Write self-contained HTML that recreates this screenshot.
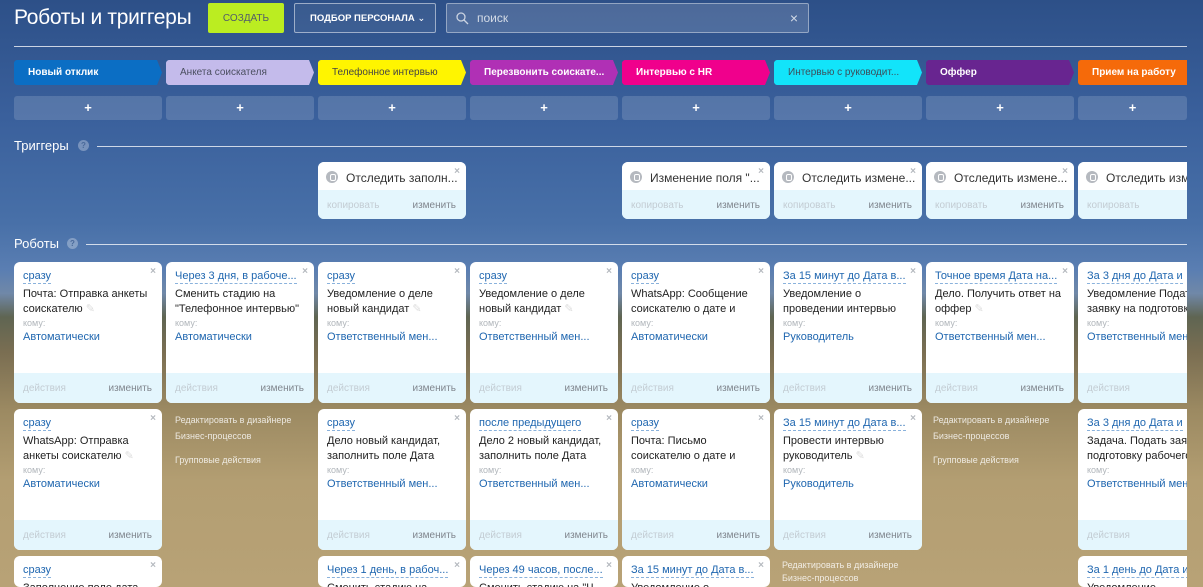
<!DOCTYPE html>
<html><head><meta charset="utf-8"><style>
*{box-sizing:border-box;margin:0;padding:0}
html{width:1203px;height:587px;overflow:hidden;background:#a8926a}
body{width:1203px;height:587px;overflow:hidden;position:relative;font-family:"Liberation Sans",sans-serif;
background:linear-gradient(180deg,#2d5088 0%,#3a609c 20%,#4870a8 38%,#5a7eb2 46%,#7088a8 50%,#5f6552 54%,#7a6e52 60%,#9c8a62 70%,#b39e72 82%,#b8a276 100%)}
.a{position:absolute}
.t{color:#fff;font-size:21px;left:14px;top:6px;letter-spacing:-.3px}
.btn{left:208px;top:3px;width:76px;height:30px;background:#bbed21;border-radius:2px;font-size:10px;color:#535c69;text-align:center;line-height:32px}
.sel{left:294px;top:3px;width:142px;height:30px;border:1px solid rgba(255,255,255,.5);border-radius:2px;color:#fff;font-size:9.5px;font-weight:bold;line-height:30px;padding-left:15px;background:rgba(255,255,255,.06)}
.srch{left:446px;top:3px;width:363px;height:30px;border:1px solid rgba(255,255,255,.4);border-radius:2px;background:rgba(255,255,255,.15);color:rgba(255,255,255,.75);font-size:12px;line-height:28px;padding-left:30px}
.hl{height:1px;background:rgba(255,255,255,.75)}
.st{top:60px;height:25px;width:152px;font-size:10px;font-weight:bold;line-height:25px;padding-left:14px;color:#fff;clip-path:polygon(0 2px,2px 0,calc(100% - 9px) 0,calc(100% - 4px) 12.5px,calc(100% - 9px) 25px,2px 25px,0 23px);border-radius:3px}
.pl{top:96px;height:24px;width:148px;background:rgba(255,255,255,.15);border-radius:3px;color:#fff;text-align:center;font-size:13px;font-weight:bold;line-height:24px}
.sec{color:#fff;font-size:13px}
.q{width:11px;height:11px;border-radius:50%;background:rgba(255,255,255,.3);color:#4a6a9a;font-size:8px;text-align:center;line-height:11px;font-weight:bold}
.tr{top:162px;width:148px;height:57px;background:#e4f6fd;border-radius:6px;overflow:hidden}
.tr .h{height:28px;background:#fff;font-size:12px;color:#333;padding:9px 0 0 28px;white-space:nowrap;position:relative}
.tr .h:before{content:"";position:absolute;left:8px;top:9px;width:12px;height:12px;border-radius:50%;background:#b5b9bf}
.tr .h:after{content:"";position:absolute;left:12px;top:12px;width:4px;height:5px;border:1px solid #fff;border-radius:2px}
.x{position:absolute;right:6px;top:4px;color:#b5b9bf;font-size:10px;font-weight:bold}
.f{position:absolute;bottom:0;left:0;right:0;height:30px;background:#e4f6fd;font-size:10px}
.f span{position:absolute;top:10px}
.f .l{left:9px;color:#c3ccd3}.f .r{right:10px;color:#80868e}
.tr .f{height:29px}
.c{width:148px;height:141px;background:#fff;border-radius:6px;overflow:hidden}
.c .d{position:absolute;left:9px;top:8px;font-size:11px;color:#2067b0;border-bottom:1px dashed #8ab2dc;white-space:nowrap;line-height:13px}
.c .n{position:absolute;left:9px;top:25px;width:136px;font-size:11px;color:#222;line-height:14.5px;max-height:29px;overflow:hidden}
.c .k{position:absolute;left:9px;top:56px;font-size:9px;color:#b1b6bb}
.c .w{position:absolute;left:9px;top:69px;font-size:11px;color:#2067b0;white-space:nowrap}
.lk{font-size:9px;color:rgba(255,255,255,.8);line-height:16px}
</style></head><body>
<div class="a t">Роботы и триггеры</div>
<div class="a btn">СОЗДАТЬ</div>
<div class="a sel">ПОДБОР ПЕРСОНАЛА <span style="font-weight:normal">&#8964;</span></div>
<div class="a srch">поиск<svg class="a" style="left:9px;top:8px" width="13" height="13" viewBox="0 0 13 13"><circle cx="5" cy="5" r="4" fill="none" stroke="rgba(255,255,255,.7)" stroke-width="1.3"/><path d="M8 8l4 4" stroke="rgba(255,255,255,.7)" stroke-width="1.3"/></svg><span class="a" style="right:10px;top:0;font-size:14px">×</span></div>
<div class="a hl" style="left:14px;top:46px;width:1173px"></div>

<div class="a st" style="left:14px;background:#0b6ec4">Новый отклик</div>
<div class="a st" style="left:166px;background:#c4bbeb;color:#4b4f60;font-weight:normal">Анкета соискателя</div>
<div class="a st" style="left:318px;background:#fff500;color:#444;font-weight:normal">Телефонное интервью</div>
<div class="a st" style="left:470px;background:#b030b5">Перезвонить соискате...</div>
<div class="a st" style="left:622px;background:#f0008c">Интервью с HR</div>
<div class="a st" style="left:774px;background:#12e4fa;color:#3d4e5b;font-weight:normal">Интервью с руководит...</div>
<div class="a st" style="left:926px;background:#682590">Оффер</div>
<div class="a st" style="left:1078px;width:109px;background:#f56a0a;clip-path:none;border-radius:3px 0 0 3px">Прием на работу</div>

<div class="a pl" style="left:14px">+</div><div class="a pl" style="left:166px">+</div><div class="a pl" style="left:318px">+</div><div class="a pl" style="left:470px">+</div><div class="a pl" style="left:622px">+</div><div class="a pl" style="left:774px">+</div><div class="a pl" style="left:926px">+</div><div class="a pl" style="left:1078px;width:109px">+</div>

<div class="a sec" style="left:14px;top:138px">Триггеры</div><div class="a q" style="left:78px;top:140px">?</div>
<div class="a hl" style="left:97px;top:146px;width:1090px"></div>
<div class="a sec" style="left:14px;top:236px">Роботы</div><div class="a q" style="left:67px;top:238px">?</div>
<div class="a hl" style="left:86px;top:244px;width:1101px"></div>

<div class="a tr" style="left:318px"><div class="h">Отследить заполн...<span class="x">×</span></div><div class="f"><span class="l">копировать</span><span class="r">изменить</span></div></div>
<div class="a tr" style="left:622px"><div class="h">Изменение поля "...<span class="x">×</span></div><div class="f"><span class="l">копировать</span><span class="r">изменить</span></div></div>
<div class="a tr" style="left:774px"><div class="h">Отследить измене...<span class="x">×</span></div><div class="f"><span class="l">копировать</span><span class="r">изменить</span></div></div>
<div class="a tr" style="left:926px"><div class="h">Отследить измене...<span class="x">×</span></div><div class="f"><span class="l">копировать</span><span class="r">изменить</span></div></div>
<div class="a tr" style="left:1078px;width:109px;border-radius:6px 0 0 6px"><div class="h">Отследить измене</div><div class="f"><span class="l">копировать</span></div></div>

<!-- row1 -->
<div class="a c" style="left:14px;top:262px"><span class="d">сразу</span><span class="x">×</span><div class="n">Почта: Отправка анкеты соискателю <span style="color:#ddd">✎</span></div><div class="k">кому:</div><div class="w">Автоматически</div><div class="f"><span class="l">действия</span><span class="r">изменить</span></div></div>
<div class="a c" style="left:166px;top:262px"><span class="d">Через 3 дня, в рабоче...</span><span class="x">×</span><div class="n">Сменить стадию на "Телефонное интервью"</div><div class="k">кому:</div><div class="w">Автоматически</div><div class="f"><span class="l">действия</span><span class="r">изменить</span></div></div>
<div class="a c" style="left:318px;top:262px"><span class="d">сразу</span><span class="x">×</span><div class="n">Уведомление о деле новый кандидат <span style="color:#ddd">✎</span></div><div class="k">кому:</div><div class="w">Ответственный мен...</div><div class="f"><span class="l">действия</span><span class="r">изменить</span></div></div>
<div class="a c" style="left:470px;top:262px"><span class="d">сразу</span><span class="x">×</span><div class="n">Уведомление о деле новый кандидат <span style="color:#ddd">✎</span></div><div class="k">кому:</div><div class="w">Ответственный мен...</div><div class="f"><span class="l">действия</span><span class="r">изменить</span></div></div>
<div class="a c" style="left:622px;top:262px"><span class="d">сразу</span><span class="x">×</span><div class="n">WhatsApp: Сообщение соискателю о дате и</div><div class="k">кому:</div><div class="w">Автоматически</div><div class="f"><span class="l">действия</span><span class="r">изменить</span></div></div>
<div class="a c" style="left:774px;top:262px"><span class="d">За 15 минут до Дата в...</span><span class="x">×</span><div class="n">Уведомление о проведении интервью</div><div class="k">кому:</div><div class="w">Руководитель</div><div class="f"><span class="l">действия</span><span class="r">изменить</span></div></div>
<div class="a c" style="left:926px;top:262px"><span class="d">Точное время Дата на...</span><span class="x">×</span><div class="n">Дело. Получить ответ на оффер <span style="color:#ddd">✎</span></div><div class="k">кому:</div><div class="w">Ответственный мен...</div><div class="f"><span class="l">действия</span><span class="r">изменить</span></div></div>
<div class="a c" style="left:1078px;top:262px;width:109px;border-radius:6px 0 0 6px"><span class="d">За 3 дня до Дата и</span><div class="n" style="white-space:nowrap">Уведомление Подать<br>заявку на подготовку</div><div class="k">кому:</div><div class="w">Ответственный мен</div><div class="f"><span class="l">действия</span></div></div>

<!-- row2 -->
<div class="a c" style="left:14px;top:409px"><span class="d">сразу</span><span class="x">×</span><div class="n">WhatsApp: Отправка анкеты соискателю <span style="color:#ddd">✎</span></div><div class="k">кому:</div><div class="w">Автоматически</div><div class="f"><span class="l">действия</span><span class="r">изменить</span></div></div>
<div class="a lk" style="left:175px;top:412px">Редактировать в дизайнере<br>Бизнес-процессов<br><span style="display:block;margin-top:8px">Групповые действия</span></div>
<div class="a c" style="left:318px;top:409px"><span class="d">сразу</span><span class="x">×</span><div class="n">Дело новый кандидат, заполнить поле Дата</div><div class="k">кому:</div><div class="w">Ответственный мен...</div><div class="f"><span class="l">действия</span><span class="r">изменить</span></div></div>
<div class="a c" style="left:470px;top:409px"><span class="d">после предыдущего</span><span class="x">×</span><div class="n">Дело 2 новый кандидат, заполнить поле Дата</div><div class="k">кому:</div><div class="w">Ответственный мен...</div><div class="f"><span class="l">действия</span><span class="r">изменить</span></div></div>
<div class="a c" style="left:622px;top:409px"><span class="d">сразу</span><span class="x">×</span><div class="n">Почта: Письмо соискателю о дате и</div><div class="k">кому:</div><div class="w">Автоматически</div><div class="f"><span class="l">действия</span><span class="r">изменить</span></div></div>
<div class="a c" style="left:774px;top:409px"><span class="d">За 15 минут до Дата в...</span><span class="x">×</span><div class="n">Провести интервью руководитель <span style="color:#ddd">✎</span></div><div class="k">кому:</div><div class="w">Руководитель</div><div class="f"><span class="l">действия</span><span class="r">изменить</span></div></div>
<div class="a lk" style="left:933px;top:412px">Редактировать в дизайнере<br>Бизнес-процессов<br><span style="display:block;margin-top:8px">Групповые действия</span></div>
<div class="a c" style="left:1078px;top:409px;width:109px;border-radius:6px 0 0 6px"><span class="d">За 3 дня до Дата и</span><div class="n" style="white-space:nowrap">Задача. Подать заявку<br>подготовку рабочего</div><div class="k">кому:</div><div class="w">Ответственный мен</div><div class="f"><span class="l">действия</span></div></div>

<!-- row3 -->
<div class="a c" style="left:14px;top:556px;height:31px"><span class="d">сразу</span><span class="x">×</span><div class="n">Заполнение поле дата</div></div>
<div class="a c" style="left:318px;top:556px;height:31px"><span class="d">Через 1 день, в рабоч...</span><span class="x">×</span><div class="n">Сменить стадию на</div></div>
<div class="a c" style="left:470px;top:556px;height:31px"><span class="d">Через 49 часов, после...</span><span class="x">×</span><div class="n">Сменить стадию на "Ч</div></div>
<div class="a c" style="left:622px;top:556px;height:31px"><span class="d">За 15 минут до Дата в...</span><span class="x">×</span><div class="n">Уведомление о</div></div>
<div class="a lk" style="left:782px;top:559px;line-height:13px">Редактировать в дизайнере<br>Бизнес-процессов</div>
<div class="a c" style="left:1078px;top:556px;width:109px;height:31px;border-radius:6px 0 0 6px"><span class="d">За 1 день до Дата и</span><div class="n">Уведомление</div></div>
</body></html>
